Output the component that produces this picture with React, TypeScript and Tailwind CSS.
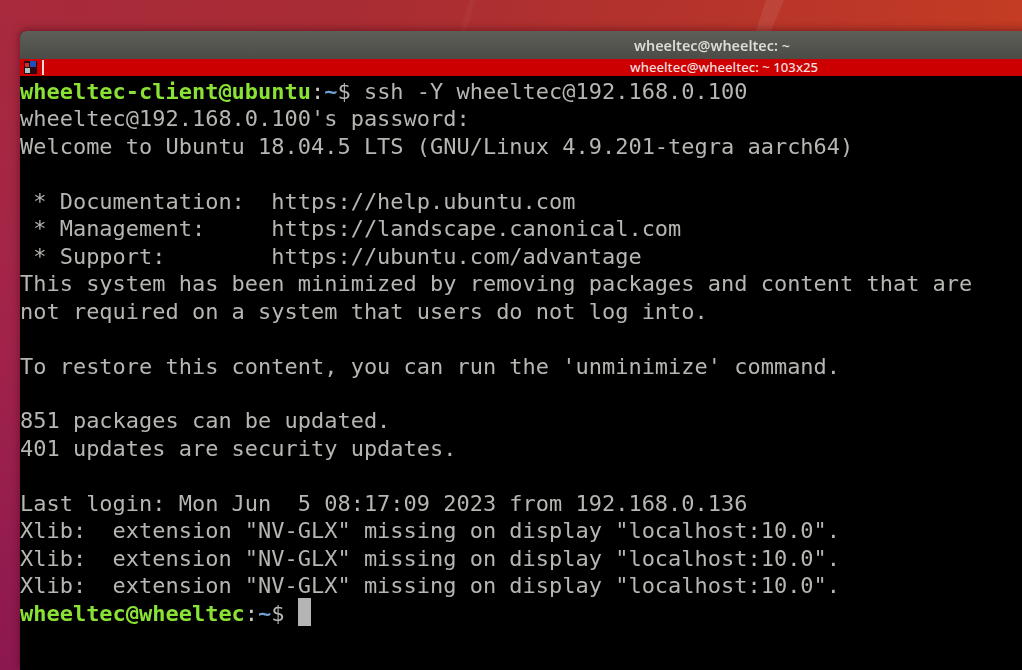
const green = "font-bold text-[#8ae234]";

const Prompt = ({ host }: { host: string }) => (
  <>
    <span className={green}>{host}</span>
    <span className="text-[#c4c8c0]">:</span>
    <span className="font-bold text-[#729fcf]">~</span>
    <span>$ </span>
  </>
);

const lines = [
  "wheeltec@192.168.0.100's password:",
  "Welcome to Ubuntu 18.04.5 LTS (GNU/Linux 4.9.201-tegra aarch64)",
  " ",
  " * Documentation:  https://help.ubuntu.com",
  " * Management:     https://landscape.canonical.com",
  " * Support:        https://ubuntu.com/advantage",
  "This system has been minimized by removing packages and content that are",
  "not required on a system that users do not log into.",
  " ",
  "To restore this content, you can run the 'unminimize' command.",
  " ",
  "851 packages can be updated.",
  "401 updates are security updates.",
  " ",
  "Last login: Mon Jun  5 08:17:09 2023 from 192.168.0.136",
  'Xlib:  extension "NV-GLX" missing on display "localhost:10.0".',
  'Xlib:  extension "NV-GLX" missing on display "localhost:10.0".',
  'Xlib:  extension "NV-GLX" missing on display "localhost:10.0".',
];

const App = () => {
  return (
    <div className="relative h-[670px] w-[1022px] overflow-hidden bg-[linear-gradient(100deg,#a82a3c_0%,#a82c34_30%,#b5332c_60%,#c83f20_100%)]">
      {/* wallpaper streaks */}
      <svg className="absolute left-0 top-0" width="1022" height="34" viewBox="0 0 1022 34">
        <path d="M766 0 L784 0 L771 31 L756 31 Z" fill="#ffffff" opacity="0.08" />
        <path d="M470 0 L476 0 L466 31 L460 31 Z" fill="#ffffff" opacity="0.03" />
      </svg>
      <div className="absolute bottom-0 left-0 top-0 w-5 bg-[linear-gradient(180deg,#a82a3c_0%,#a2234a_50%,#8c1850_100%)]" />

      <div className="relative ml-5 mt-[31px] flex h-[639px] w-[1100px] flex-col overflow-hidden rounded-tl-[6px] bg-black shadow-[0_-1px_8px_rgba(50,0,15,0.5)]">
        <div className="flex h-[28px] items-center bg-[linear-gradient(180deg,#5f5f59_0%,#4b4b47_100%)] pl-[614px] pt-[1px] font-['Noto_Sans',sans-serif] text-[14.4px] font-semibold text-[#dcdcd6] blur-[0.3px]">
          wheeltec@wheeltec: ~
        </div>
        <div className="relative flex h-[17px] items-center bg-[#cc0000] pl-[610px] font-['Noto_Sans',sans-serif] text-[13.2px] font-medium text-[#f3dcdc]">
          <svg className="absolute left-[4px] top-[1px]" width="13" height="15" viewBox="0 0 13 15">
            <rect x="0" y="1" width="13" height="13" fill="#2a0a10" />
            <rect x="6" y="1" width="6" height="6" fill="#1c50b8" />
            <rect x="1" y="3" width="4" height="4" fill="#d03030" />
            <rect x="1" y="8" width="5" height="5" fill="#a8c8c4" />
          </svg>
          <span className="absolute left-[22px] top-[1px] h-[15px] w-[2px] bg-[#f4d8d8]" />
          wheeltec@wheeltec: ~ 103x25
        </div>
        <div className="whitespace-pre pt-[2px] font-['DejaVu_Sans_Mono',monospace] text-[21.97px] leading-[27.45px] text-[#b6b6b2] blur-[0.5px]">
          <div>
            <Prompt host="wheeltec-client@ubuntu" />
            ssh -Y wheeltec@192.168.0.100
          </div>
          {lines.map((line, i) => (
            <div key={i}>{line}</div>
          ))}
          <div className="flex items-center">
            <span>
              <Prompt host="wheeltec@wheeltec" />
            </span>
            <span className="-mt-[3px] h-[28px] w-[13px] bg-[#b4b4b4]" />
          </div>
        </div>
      </div>
    </div>
  );
};

export default App;
